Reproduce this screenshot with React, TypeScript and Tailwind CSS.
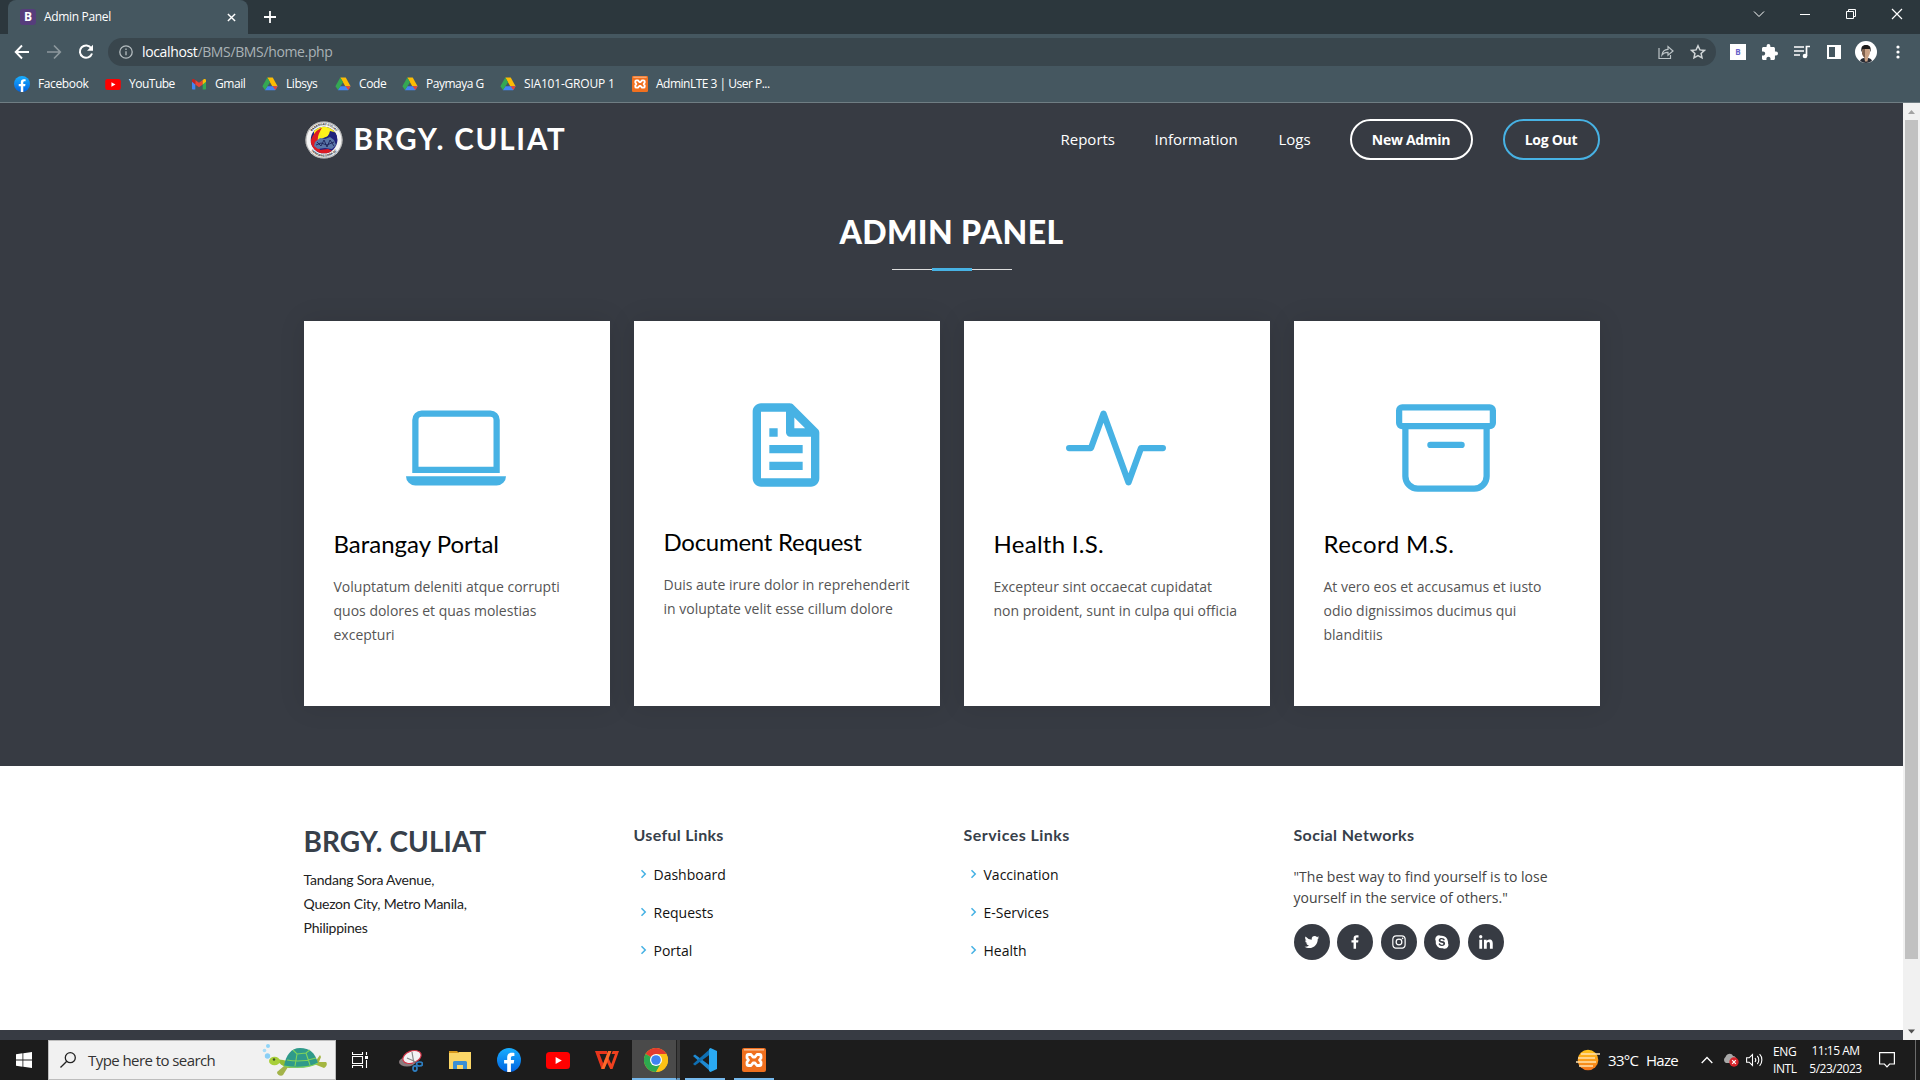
import React from "react";
import { BsLaptop, BsActivity, BsArchive } from "react-icons/bs";
import {
  BiFile,
  BiChevronRight,
  BiLogoTwitter,
  BiLogoFacebook,
  BiLogoInstagram,
  BiLogoSkype,
  BiLogoLinkedin,
} from "react-icons/bi";

const DriveIcon = () => (
  <svg viewBox="0 0 16 16" className="h-4 w-4 shrink-0">
    <path d="M5.300 1.500h5.400l4.900 8.700h-5.300z" fill="#fbbc04" />
    <path d="M2.800 14.300l2.500-4.100h10.300l-2.500 4.100z" fill="#4285f4" />
    <path d="M10.600 10.200h5l-2.200 3.900z" fill="#ea4335" />
    <path d="M.4 10.200L5.300 1.500 8 6.300 3 14z" fill="#34a853" />
  </svg>
);

const FacebookIcon = ({ className }: { className: string }) => (
  <svg viewBox="0 0 24 24" className={className}>
    <defs>
      <linearGradient id="fbg" x1="0" y1="0" x2="0" y2="1">
        <stop offset="0" stopColor="#19afff" />
        <stop offset="1" stopColor="#0062e0" />
      </linearGradient>
    </defs>
    <circle cx="12" cy="12" r="12" fill="url(#fbg)" />
    <path d="M16.700 15.500l.5-3.500h-3.300V9.800c0-1 .5-1.900 2-1.900h1.500v-3s-1.400-.2-2.700-.2c-2.700 0-4.500 1.600-4.500 4.600V12H7.100v3.500h3.100v8.400a12 12 0 003.700 0v-8.400z" fill="#fff" />
  </svg>
);

const YouTubeIcon = ({ className }: { className: string }) => (
  <svg viewBox="0 0 24 17" className={className}>
    <rect width="24" height="17" rx="3.500" fill="#f00" />
    <path d="M9.600 5l6.200 3.500L9.600 12z" fill="#fff" />
  </svg>
);

const GmailIcon = () => (
  <svg viewBox="0 0 16 16" className="h-4 w-4 shrink-0">
    <path d="M1 4v8.500c0 .6.400 1 1 1h2.300V6.700z" fill="#4285f4" />
    <path d="M15 4v8.500c0 .6-.4 1-1 1h-2.300V6.700z" fill="#34a853" />
    <path d="M4.300 4v4.500L8 11.200l3.700-2.700V4L8 6.800z" fill="#ea4335" />
    <path d="M1 4.200v1.500l3.300 2.800V4.100l-.8-.6C2.500 2.700 1 3.100 1 4.200z" fill="#c5221f" />
    <path d="M15 4.200v1.500l-3.300 2.800V4.100l.8-.6c1-.8 2.500-.4 2.500.7z" fill="#fbbc04" />
  </svg>
);

const XamppIcon = ({ className }: { className: string }) => (
  <svg viewBox="0 0 24 24" className={className}>
    <rect width="24" height="24" rx="2" fill="#f0701f" />
    <rect x="2" y="1" width="20" height="1.600" fill="#f9b98c" />
    <path
      d="M6.500 6.500h2.500l2 2.500h2l2-2.500h2.500a1.500 1.500 0 011.500 1.500v2L17.500 12l1.500 2v2a1.500 1.500 0 01-1.500 1.500H15L13 15h-2l-2 2.500H6.500A1.500 1.500 0 015 16v-2l1.500-2L5 10V8a1.500 1.500 0 011.500-1.500z"
      fill="none"
      stroke="#fff"
      strokeWidth="2.800"
      strokeLinejoin="round"
    />
  </svg>
);

const bookmarks = [
  { label: "Facebook", icon: <FacebookIcon className="h-4 w-4 shrink-0" />, cls: "w-[91px] tracking-[-0.38px]" },
  { label: "YouTube", icon: <YouTubeIcon className="h-[11px] w-4 shrink-0" />, cls: "w-[86px] tracking-[-0.5px]" },
  { label: "Gmail", icon: <GmailIcon />, cls: "w-[71px] tracking-[-0.45px]" },
  { label: "Libsys", icon: <DriveIcon />, cls: "w-[73px] tracking-[-0.45px]" },
  { label: "Code", icon: <DriveIcon />, cls: "w-[67px] tracking-[-0.35px]" },
  { label: "Paymaya G", icon: <DriveIcon />, cls: "w-[98px] tracking-[-0.5px]" },
  { label: "SIA101-GROUP 1", icon: <DriveIcon />, cls: "w-[132px] tracking-[-0.2px]" },
  { label: "AdminLTE 3 | User P...", icon: <XamppIcon className="h-4 w-4 shrink-0" />, cls: "tracking-[-0.5px]" },
];

const TabStrip = () => (
  <div className="flex h-[34px] justify-between bg-[#2c373d]">
    <div className="flex pl-2">
      <div className="flex h-[34px] w-[240px] items-center rounded-t-[8px] bg-[#455760] pl-3 pr-3">
        <div className="flex h-4 w-4 items-center justify-center rounded-[3px] bg-[#563d7c] text-[12px] font-bold text-white">B</div>
        <span className="ml-2 flex-1 text-[12px] tracking-[-0.33px] text-white">Admin Panel</span>
        <svg viewBox="0 0 10 10" className="h-[9px] w-[9px]">
          <path d="M1 1l8 8M9 1l-8 8" stroke="#fff" strokeWidth="1.600" />
        </svg>
      </div>
      <svg viewBox="0 0 12 12" className="ml-4 mt-[11px] h-3 w-3">
        <path d="M6 0v12M0 6h12" stroke="#fff" strokeWidth="1.800" />
      </svg>
    </div>
    <div className="flex h-7 items-center">
      <svg viewBox="0 0 46 28" className="h-7 w-[46px]" fill="none" stroke="#fff">
        <path d="M18 11.500l5 5 5-5" />
      </svg>
      <svg viewBox="0 0 46 28" className="h-7 w-[46px]" fill="none" stroke="#fff">
        <path d="M18 14.500h10" />
      </svg>
      <svg viewBox="0 0 46 28" className="h-7 w-[46px]" fill="none" stroke="#fff">
        <path d="M18.500 11.500h7v7h-7zM20.500 11.500v-2h7v7h-2" />
      </svg>
      <svg viewBox="0 0 46 28" className="h-7 w-[46px]" fill="none" stroke="#fff" strokeWidth="1.200">
        <path d="M18 9l10 10M28 9L18 19" />
      </svg>
    </div>
  </div>
);

const Toolbar = () => (
  <div className="flex h-9 items-center bg-[#455760]">
    <svg viewBox="0 0 16 16" className="ml-[14px] h-4 w-4" fill="none" stroke="#fff" strokeWidth="1.900">
      <path d="M15 8H2M8 1.500L1.700 8 8 14.500" />
    </svg>
    <svg viewBox="0 0 16 16" className="ml-4 h-4 w-4" fill="none" stroke="#8d989d" strokeWidth="1.700">
      <path d="M1 8h13M8 1.500L14.300 8 8 14.500" />
    </svg>
    <svg viewBox="0 0 16 16" className="ml-4 h-4 w-4" fill="none" stroke="#fff" strokeWidth="2">
      <path d="M13.300 4.200A6.200 6.200 0 1014 9.500" />
      <path d="M15 .8v6H9z" fill="#fff" stroke="none" />
    </svg>
    <div className="ml-[14px] flex h-7 w-[1608px] items-center rounded-full bg-[#39464d] pl-[11px] pr-[10px]">
      <svg viewBox="0 0 14 14" className="h-[14px] w-[14px]" fill="none" stroke="#b5bdc0" strokeWidth="1.300">
        <circle cx="7" cy="7" r="6.200" />
        <path d="M7 6.200v4M7 3.600v1.400" />
      </svg>
      <span className="ml-[9px] flex-1 pb-px text-[14px] tracking-[-0.36px] text-[#a9b2b6]">
        <span className="text-white">localhost</span>/BMS/BMS/home.php
      </span>
      <svg viewBox="0 0 16 16" className="h-4 w-4" fill="none" stroke="#bcc4c7" strokeWidth="1.200">
        <path d="M1 4v10.500h11.500V11" />
        <path d="M4 11c.5-4 3-5.500 6-5.600V2.500L15 7l-5 4.200V8.300C7.500 8.200 5.500 9 4 11z" />
      </svg>
      <svg viewBox="0 0 16 16" className="ml-4 h-4 w-4" fill="none" stroke="#d0d5d7" strokeWidth="1.500">
        <path d="M8 1.800l1.900 4.100 4.500.5-3.300 3 .9 4.400L8 11.600l-4 2.200.9-4.400-3.300-3 4.500-.5z" />
      </svg>
    </div>
    <div className="ml-[14px] flex h-4 w-4 items-center justify-center bg-white text-[8px] font-bold text-[#6a63c9]">B</div>
    <svg viewBox="2 1 21 21" className="ml-4 h-[16px] w-[16px]" fill="#fff">
      <path d="M20.500 11H19V7c0-1.100-.9-2-2-2h-4V3.500a2.500 2.500 0 00-5 0V5H4c-1.100 0-2 .9-2 2v3.800h1.500c1.500 0 2.700 1.200 2.700 2.700S5 16.200 3.500 16.200H2V20c0 1.100.9 2 2 2h3.800v-1.500c0-1.500 1.200-2.700 2.700-2.700s2.700 1.200 2.700 2.700V22H17c1.100 0 2-.9 2-2v-4h1.500a2.500 2.500 0 000-5z" />
    </svg>
    <svg viewBox="0 0 16 16" className="ml-4 h-4 w-4" fill="none" stroke="#fff" strokeWidth="1.700">
      <path d="M0 3h10M0 7h10M0 11h6M12.500 12V2.500H16" />
      <circle cx="11" cy="12" r="2.300" fill="#fff" stroke="none" />
    </svg>
    <div className="ml-[17px] h-[14px] w-[14px] border-[2px] border-r-[6px] border-white" />
    <svg viewBox="0 0 22 22" className="ml-[14px] h-[22px] w-[22px]">
      <circle cx="11" cy="11" r="11" fill="#fff" />
      <path d="M5 20c.5-2.500 3-3 6-3s5.500.5 6 3A11 11 0 015 20z" fill="#262a33" />
      <path d="M9 15h4.500l-1 5.500h-2.500z" fill="#c9a184" />
      <ellipse cx="11" cy="11" rx="4" ry="5.600" fill="#c9a184" />
      <path d="M7 12.500c1 3 2 4 3 4.300V8H7.500z" fill="#7d5f4c" />
      <path d="M6.500 11C5.800 6.500 7 4 11 4s5.300 2.500 4.500 7c-.6-1-.5-2.500-1-3H8C7 8.500 7.200 10 6.500 11z" fill="#1e1b1a" />
    </svg>
    <svg viewBox="0 0 4 14" className="ml-[19px] h-[14px] w-1" fill="#fff">
      <circle cx="2" cy="2" r="1.600" />
      <circle cx="2" cy="7" r="1.600" />
      <circle cx="2" cy="12" r="1.600" />
    </svg>
  </div>
);

const BookmarksBar = () => (
  <div className="flex h-[33px] items-center border-b border-[#6f7d83] bg-[#455760] pb-1 pl-[14px]">
    {bookmarks.map((b) => (
      <div key={b.label} className={"flex shrink-0 items-center gap-2 whitespace-nowrap text-[12px] text-white " + b.cls}>
        {b.icon}
        <span className="pb-px">{b.label}</span>
      </div>
    ))}
  </div>
);

const Seal = () => (
  <svg viewBox="0 0 38 38" className="h-[38px] w-[38px]">
    <defs>
      <path id="seal-top" d="M4.200 19a14.800 14.800 0 0129.600 0" />
      <path id="seal-bottom" d="M2.300 19a16.700 16.700 0 0033.400 0" />
      <clipPath id="seal-clip">
        <circle cx="19" cy="19" r="13.300" />
      </clipPath>
    </defs>
    <circle cx="19" cy="19" r="18.600" fill="#f4f4f4" />
    <circle cx="19" cy="19" r="18" fill="none" stroke="#666" strokeWidth=".5" />
    <g fontSize="3" fontWeight="700" fill="#222" fontFamily="Open Sans" textAnchor="middle">
      <text>
        <textPath href="#seal-top" startOffset="50%">BARANGAY CULIAT</textPath>
      </text>
      <text>
        <textPath href="#seal-bottom" startOffset="50%">TANDANG SORA QC</textPath>
      </text>
    </g>
    <g clipPath="url(#seal-clip)">
      <rect width="38" height="38" fill="#20227c" />
      <path d="M9 5h22v7l-8 3-7 3-7 8z" fill="#f7ef1d" />
      <path d="M5 22C7 14 12 8 17 7c-3 5-5 9-4 14l2 8 8-1 7 3-6 6H5z" fill="#dc1a22" />
      <path d="M25 10l8 2v10l-6-4-5-3z" fill="#20227c" />
      <circle cx="20" cy="11" r="4.500" fill="#fff31a" />
      <path d="M10 21l5-4 5 1 5-2 4 3 2 5-4 4-7-1-7 1-4-3z" fill="#5a76a8" />
      <path d="M12 21l4 4 3-6 3 7 3-7 4 6M11 24l5-2 6 2 7-3" stroke="#1c2258" strokeWidth=".9" fill="none" />
    </g>
  </svg>
);

const cards = [
  { title: "Barangay Portal", titleCls: "tracking-[0px]", text: "Voluptatum deleniti atque corrupti quos dolores et quas molestias excepturi", icon: <BsLaptop className="h-[100px] w-[100px]" />, pad: "pt-[77px]", iconCls: "pr-[2px]" },
  { title: "Document Request", titleCls: "tracking-[-0.27px]", text: "Duis aute irure dolor in reprehenderit in voluptate velit esse cillum dolore", icon: <BiFile className="h-[100px] w-[100px]" />, pad: "pt-[74px]", iconCls: "pr-[2px] pb-px" },
  { title: "Health I.S.", titleCls: "tracking-[0.28px]", text: "Excepteur sint occaecat cupidatat non proident, sunt in culpa qui officia", icon: <BsActivity className="h-[100px] w-[100px]" />, pad: "pt-[77px]", iconCls: "pr-[2px]" },
  { title: "Record M.S.", titleCls: "tracking-[0.42px]", text: "At vero eos et accusamus et iusto odio dignissimos ducimus qui blanditiis", icon: <BsArchive className="h-[100px] w-[100px]" />, pad: "pt-[77px]", iconCls: "pr-[2px]" },
];

const LinkColumn = ({ title, cls, links }: { title: string; cls: string; links: string[] }) => (
  <div className="-mt-px">
    <h4 className={"font-['Lato'] text-[16px] font-bold leading-[19px] text-[#37404a] " + cls}>{title}</h4>
    <ul className="mt-[11px]">
      {links.map((l) => (
        <li key={l} className="flex h-[38px] items-center text-[14px] text-[#111]">
          <BiChevronRight className="h-[18px] w-[18px] text-[#47b2e4]" />
          <span className="ml-[2px]">{l}</span>
        </li>
      ))}
    </ul>
  </div>
);

const socials = [BiLogoTwitter, BiLogoFacebook, BiLogoInstagram, BiLogoSkype, BiLogoLinkedin];

const Page = () => (
  <div className="flex w-[1903px] flex-col">
    <div className="h-[663px] bg-[#373b43]">
      <header className="mx-auto flex h-[73px] w-[1296px] items-center justify-between pl-px">
        <div className="flex items-center gap-[11px]">
          <Seal />
          <span className="font-['Lato'] text-[29.5px] font-bold tracking-[1.8px] text-white">BRGY. CULIAT</span>
        </div>
        <nav className="flex items-center text-[15px] font-medium text-white">
          <span className="w-[94px]">Reports</span>
          <span className="w-[124px]">Information</span>
          <span className="w-[71px]">Logs</span>
          <span className="flex h-[41px] w-[123px] items-center justify-center rounded-full border-2 border-white text-[14px] font-bold tracking-[-0.3px]">New Admin</span>
          <span className="ml-[30px] flex h-[41px] w-[97px] items-center justify-center rounded-full border-2 border-[#47b2e4] text-[14px] font-bold tracking-[-0.3px]">Log Out</span>
        </nav>
      </header>
      <div className="flex flex-col items-center pt-[36px]">
        <h2 className="font-['Lato'] text-[32px] font-black leading-[40px] tracking-[0.35px] text-white">ADMIN PANEL</h2>
        <div className="mt-4 flex h-[3px] w-[120px] items-center justify-center bg-[linear-gradient(to_bottom,transparent_1px,#ddd_1px,#ddd_2px,transparent_2px)]">
          <div className="h-[3px] w-10 bg-[#47b2e4]" />
        </div>
      </div>
      <div className="mx-auto mt-[50px] grid w-[1296px] grid-cols-4 gap-6">
        {cards.map((c) => (
          <div key={c.title} className={"h-[385px] bg-white px-[30px] shadow-[0_0_25px_rgba(0,0,0,0.1)] " + c.pad}>
            <div className={"flex justify-center text-[#47b2e4] " + c.iconCls}>{c.icon}</div>
            <h4 className={"mt-[31px] whitespace-nowrap font-['Lato'] text-[24px] leading-[30px] text-black " + c.titleCls}>{c.title}</h4>
            <p className="mt-4 text-[14px] leading-6 text-[#555]">{c.text}</p>
          </div>
        ))}
      </div>
    </div>
    <footer className="h-[264px] bg-white pt-[60px]">
      <div className="mx-auto grid w-[1296px] grid-cols-4 gap-6">
        <div>
          <h3 className="font-['Lato'] text-[28px] font-bold leading-[30px] tracking-[0.1px] text-[#37404a]">BRGY. CULIAT</h3>
          <p className="mt-[12px] font-['Lato'] text-[14px] leading-6 tracking-[-0.22px] text-[#222]">
            Tandang Sora Avenue,
            <br />
            Quezon City, Metro Manila,
            <br />
            Philippines
          </p>
        </div>
        <LinkColumn title="Useful Links" cls="tracking-[0.3px]" links={["Dashboard", "Requests", "Portal"]} />
        <LinkColumn title="Services Links" cls="tracking-[0.47px]" links={["Vaccination", "E-Services", "Health"]} />
        <div className="-mt-px">
          <h4 className="font-['Lato'] text-[16px] font-bold leading-[19px] tracking-[0.35px] text-[#37404a]">Social Networks</h4>
          <p className="mt-[22px] text-[14px] leading-[21px] text-[#444]">
            "The best way to find yourself is to lose
            <br />
            yourself in the service of others."
          </p>
          <div className="mt-[16px] flex gap-[7.500px]">
            {socials.map((Icon, i) => (
              <span key={i} className="flex h-9 w-9 items-center justify-center rounded-full bg-[#373b43] pb-px text-white">
                <Icon className="h-[18px] w-[18px]" />
              </span>
            ))}
          </div>
        </div>
      </div>
    </footer>
    <div className="h-[10px] bg-[#373b43]" />
  </div>
);

const Scrollbar = () => (
  <div className="flex w-[17px] flex-col items-center justify-between bg-[#f1f1f1]">
    <div className="flex flex-col items-center">
      <svg viewBox="0 0 17 17" className="h-[17px] w-[17px]">
        <path d="M5 11l3.500-4 3.500 4z" fill="#a3a3a3" />
      </svg>
      <div className="h-[839px] w-[13px] bg-[#c1c1c1]" />
    </div>
    <svg viewBox="0 0 17 17" className="h-[17px] w-[17px]">
      <path d="M5 6.500l3.500 4 3.500-4z" fill="#505050" />
    </svg>
  </div>
);

const Turtle = () => (
  <svg viewBox="0 0 66 36" className="h-9 w-[66px]">
    <circle cx="6" cy="4" r="2" fill="#8fd4f7" />
    <circle cx="2.500" cy="8.500" r="1.800" fill="#a5dcf8" />
    <circle cx="5.500" cy="14" r="2.700" fill="#8acff5" />
    <path d="M53 20l5-7 1 2-2 5 7 0c2 2 0 5-2 6l-10-4z" fill="#a4b640" />
    <path d="M22 24l-7 6c0 3 4 5 6 3l5-8z" fill="#a3b34a" />
    <path d="M13 17c4 4 8 8 14 9l20-2-26-6z" fill="#93bd35" />
    <ellipse cx="12.500" cy="19" rx="5.500" ry="4.300" fill="#a8cf3a" />
    <circle cx="12" cy="17.500" r="1.200" fill="#40522a" />
    <path d="M22 24c2-11 7-18 16-18 10 0 15 5 18 15-8 5-23 6-34 3z" fill="#2f9a8a" />
    <path d="M22 24c11 2 26 2 34-3M25 18c10 2 20 1 29-2M31 8l4 4 9-1 4-3M35 12l-2 12M44 11l4 12M35 12l9-1" stroke="#7fd35b" strokeWidth="1.100" fill="none" />
  </svg>
);

const ChromeIcon = () => (
  <svg viewBox="0 0 24 24" className="h-6 w-6">
    <circle cx="12" cy="12" r="12" fill="#fbc116" />
    <path d="M12 12L1.600 6A12 12 0 0122.400 6z" fill="#e33b2e" />
    <path d="M12 12L1.600 6A12 12 0 0012 24l5.200-9z" fill="#2da94f" />
    <path d="M12 6h10.400a12 12 0 01-10.400 18l5.200-9z" fill="#fbc116" />
    <circle cx="12" cy="12" r="6" fill="#fff" />
    <circle cx="12" cy="12" r="4.800" fill="#3f83f0" />
  </svg>
);

const Taskbar = () => (
  <div className="flex h-10 items-stretch bg-[#1c1c1c] text-white">
    <div className="flex w-12 items-center justify-center">
      <svg viewBox="0 0 16 16" className="h-4 w-4" fill="#fff">
        <path d="M0 2.200L6.500 1.300v6.300H0zM7.300 1.200L16 0v7.600H7.300zM0 8.400h6.500v6.300L0 13.800zM7.300 8.400H16V16l-8.700-1.200z" />
      </svg>
    </div>
    <div className="flex w-[288px] items-center border border-[#bdbdbd] bg-[#f1f1f1] pl-[11px] pr-[7px]">
      <svg viewBox="0 0 16 16" className="h-4 w-4" fill="none" stroke="#222" strokeWidth="1.300">
        <circle cx="10.300" cy="5.700" r="5" />
        <path d="M6.800 9.200L.5 15.500" />
      </svg>
      <span className="ml-3 flex-1 whitespace-nowrap text-[15px] tracking-[-0.57px] text-[#333]">Type here to search</span>
      <Turtle />
    </div>
    <div className="flex w-[48px] items-center justify-center">
      <svg viewBox="0 0 16 16" className="h-4 w-4" fill="none" stroke="#fff" strokeWidth="1.100">
        <path d="M.5 0v2.500h10V0M.5 16v-2.500h10V16M.5 4.500h10v7H.5zM14.500 0v3M14.500 8v8" />
        <path d="M13 4h3v3h-3z" fill="#fff" stroke="none" />
      </svg>
    </div>
    <div className="flex w-[54px] items-center justify-center">
      <svg viewBox="0 0 24 24" className="h-6 w-6">
        <ellipse cx="8" cy="14" rx="8" ry="4.500" fill="#8b7d80" />
        <ellipse cx="13" cy="9" rx="9.500" ry="6" transform="rotate(-20 13 9)" fill="#f3f3f5" stroke="#d6364a" strokeWidth="1.200" />
        <path d="M13 4l2 12M8 10l9 4" stroke="#888" strokeWidth="1.200" />
        <g fill="none" stroke="#2e7fc2" strokeWidth="1.700">
          <ellipse cx="20.500" cy="16" rx="3" ry="2" />
          <ellipse cx="16" cy="20.500" rx="2" ry="2.600" />
        </g>
      </svg>
    </div>
    <div className="flex w-[44px] items-center justify-center">
      <svg viewBox="0 0 22 18" className="h-[18px] w-[22px]">
        <path d="M0 0h8l2 2H0z" fill="#d99a1c" />
        <path d="M0 2h9l1-1h12v17H0z" fill="#fbd667" />
        <path d="M4 18V11a2 2 0 012-1h10a2 2 0 012 1v7h-4v-4H8v4z" fill="#3b8fd6" />
      </svg>
    </div>
    <div className="flex w-[54px] items-center justify-center">
      <FacebookIcon className="h-6 w-6" />
    </div>
    <div className="flex w-[44px] items-center justify-center">
      <YouTubeIcon className="h-[17px] w-6" />
    </div>
    <div className="flex w-[52px] items-center justify-center pl-0.5">
      <svg viewBox="0 0 24 18" className="h-[18px] w-6">
        <path d="M0 0h12v3H4.600l3.600 9.500L10 8l1.800 4.500L8.800 18H6.500z" fill="#e8351c" />
        <path d="M12 4l4.300 9L20 3h-3.500L17.700 0H24l-6.500 18h-2.300L10.500 8z" fill="#f0401f" />
        <path d="M13 0h3.500L9.500 18H6.300z" fill="#ff6a2a" />
      </svg>
    </div>
    <div className="flex w-[44px] items-center justify-center border-b-2 border-[#76b9ed] bg-[#4a4a4a] pl-1 pt-0.5">
      <ChromeIcon />
    </div>
    <div className="w-1 border-b-2 border-l border-b-[#5f96c0] border-l-[#222] bg-[#3c3c3c]" />
    <div className="ml-[5px] flex w-10 items-center justify-center border-b-2 border-[#76b9ed] pt-0.5">
      <svg viewBox="0 0 24 24" className="h-6 w-6">
        <path d="M0 8l2-1.600L17.500 18v5.500z" fill="#1f8ad2" />
        <path d="M0 16l2 1.600L17.500 6V.5z" fill="#0f6fb3" />
        <path d="M17.500 0L24 3v18l-6.500 3-1.500-1V1z" fill="#2aa9f2" />
      </svg>
    </div>
    <div className="ml-[9px] flex w-10 items-center justify-center border-b-2 border-[#76b9ed] pt-0.5">
      <XamppIcon className="h-6 w-6" />
    </div>
    <div className="flex flex-1 items-center justify-end">
      <svg viewBox="0 0 24 22" className="h-[22px] w-6">
        <defs>
          <linearGradient id="sun" x1="0" y1="0" x2="0" y2="1">
            <stop offset="0" stopColor="#ffc61a" />
            <stop offset="1" stopColor="#f4741c" />
          </linearGradient>
        </defs>
        <circle cx="12" cy="11" r="10.300" fill="url(#sun)" />
        <path d="M5 5h19M2 9h13M8 9h11M0 13h14M3 17h14M14 13h6" stroke="#ffe2ae" strokeWidth="1.700" />
      </svg>
      <span className="ml-2 w-[38px] text-[15px] tracking-[-0.7px]">33°C</span>
      <span className="w-[55px] text-[15px] tracking-[-0.7px]">Haze</span>
      <svg viewBox="0 0 12 8" className="h-2 w-3" fill="none" stroke="#fff" strokeWidth="1.300">
        <path d="M.7 7L6 1.500 11.300 7" />
      </svg>
      <svg viewBox="0 0 17 14" className="ml-[9px] h-[14px] w-[17px]">
        <path d="M4 10a3.500 3.500 0 01-.5-6C5 0 10 0 11 3c3 0 4 3 3 7z" fill="#a8a8a8" />
        <circle cx="12" cy="9" r="4.700" fill="#d8262c" />
        <path d="M10.200 7.200l3.600 3.600M13.800 7.200l-3.600 3.600" stroke="#fff" strokeWidth="1.200" />
      </svg>
      <svg viewBox="0 0 17 14" className="ml-[7px] h-[14px] w-[17px]" fill="none" stroke="#fff" strokeWidth="1.100">
        <path d="M.6 4.800h2.600L6.500 1.500v11L3.200 9.200H.6zM9 5c.8 1 .8 3 0 4M11.300 3c2 2 2 6 0 8M13.600 1.200c3 3 3 8.600 0 11.600" />
      </svg>
      <div className="ml-[10px] w-[36px] text-[12px] leading-[17.500px] tracking-[-0.4px]">
        <div>ENG</div>
        <div>INTL</div>
      </div>
      <div className="w-[53px] whitespace-nowrap pb-px text-center text-[12px] leading-[17.500px] tracking-[-0.5px]">
        <div>11:15 AM</div>
        <div>5/23/2023</div>
      </div>
      <svg viewBox="0 0 16 16" className="ml-[17px] h-4 w-4" fill="none" stroke="#fff" strokeWidth="1.200">
        <path d="M.6.600h14.800v11.400h-4.800L8 14.800 5.400 12H.6z" />
      </svg>
      <div className="ml-[20px] mr-1 h-10 w-px bg-[#6b6b6b]" />
    </div>
  </div>
);

export default function App() {
  return (
    <div className="h-[1080px] w-[1920px] overflow-hidden font-['Open_Sans',sans-serif]">
      <TabStrip />
      <Toolbar />
      <BookmarksBar />
      <div className="flex h-[937px]">
        <Page />
        <Scrollbar />
      </div>
      <Taskbar />
    </div>
  );
}
